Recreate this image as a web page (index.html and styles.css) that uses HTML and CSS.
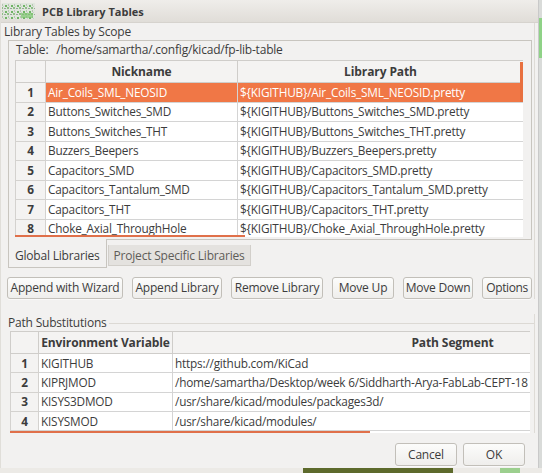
FILE: index.html
```html
<!DOCTYPE html>
<html>
<head>
<meta charset="utf-8">
<link rel="stylesheet" href="styles.css">
</head>
<body>
<div class="screen">
  <div class="top">
    <div class="dialog">
      <div class="titlebar">
        <svg class="appicon" width="36" height="20" viewBox="0 0 36 20">
          <defs>
            <pattern id="mot" width="6" height="6" patternUnits="userSpaceOnUse">
              <rect width="6" height="6" fill="#dfe6dc"/>
              <rect x="0" y="0" width="2" height="2" fill="#8fbf86"/>
              <rect x="3" y="1" width="2" height="1" fill="#9aa59a"/>
              <rect x="1" y="3" width="1" height="2" fill="#b7c4b3"/>
              <rect x="4" y="4" width="2" height="2" fill="#6fb365"/>
              <rect x="2" y="5" width="1" height="1" fill="#c8d0c6"/>
            </pattern>
          </defs>
          <rect x="1" y="2" width="33" height="16" fill="url(#mot)"/>
          <rect x="20" y="12" width="12" height="5" fill="#7cc46e" opacity="0.7"/>
        </svg>
        <span class="title">PCB Library Tables</span>
      </div>

      <div class="scope">
        <div class="scope-label">Library Tables by Scope</div>
        <div class="notebook">
          <div class="page">
            <div class="table-path"><span class="tp-key">Table:</span><span>/home/samartha/.config/kicad/fp-lib-table</span></div>
            <div class="grid-wrap grid-wrap1">
              <table class="grid grid1">
                <colgroup><col class="c-num1"><col class="c-nick"><col class="c-path"></colgroup>
                <thead>
                  <tr><th class="corner"></th><th>Nickname</th><th>Library Path</th></tr>
                </thead>
                <tbody>
                  <tr class="sel"><td class="rn">1</td><td>Air_Coils_SML_NEOSID</td><td>${KIGITHUB}/Air_Coils_SML_NEOSID.pretty</td></tr>
                  <tr><td class="rn">2</td><td>Buttons_Switches_SMD</td><td>${KIGITHUB}/Buttons_Switches_SMD.pretty</td></tr>
                  <tr><td class="rn">3</td><td>Buttons_Switches_THT</td><td>${KIGITHUB}/Buttons_Switches_THT.pretty</td></tr>
                  <tr><td class="rn">4</td><td>Buzzers_Beepers</td><td>${KIGITHUB}/Buzzers_Beepers.pretty</td></tr>
                  <tr><td class="rn">5</td><td>Capacitors_SMD</td><td>${KIGITHUB}/Capacitors_SMD.pretty</td></tr>
                  <tr><td class="rn">6</td><td>Capacitors_Tantalum_SMD</td><td>${KIGITHUB}/Capacitors_Tantalum_SMD.pretty</td></tr>
                  <tr><td class="rn">7</td><td>Capacitors_THT</td><td>${KIGITHUB}/Capacitors_THT.pretty</td></tr>
                  <tr><td class="rn">8</td><td>Choke_Axial_ThroughHole</td><td>${KIGITHUB}/Choke_Axial_ThroughHole.pretty</td></tr>
                </tbody>
              </table>
              <div class="vthumb"></div>
              <div class="hthumb hthumb1"></div>
            </div>
          </div>
          <div class="tabs">
            <div class="tab active">Global Libraries</div>
            <div class="tab">Project Specific Libraries</div>
          </div>
        </div>
        <div class="buttons">
          <button class="btn b-wizard">Append with Wizard</button>
          <button class="btn b-append">Append Library</button>
          <button class="btn b-remove">Remove Library</button>
          <button class="btn b-up">Move Up</button>
          <button class="btn b-down">Move Down</button>
          <button class="btn b-options">Options</button>
        </div>
      </div>

      <div class="subst">
        <div class="subst-head"><span class="subst-label">Path Substitutions</span><span class="subst-line"></span></div>
        <div class="grid-wrap grid-wrap2">
          <table class="grid grid2">
            <colgroup><col class="c-num2"><col class="c-env"><col class="c-seg"></colgroup>
            <thead>
              <tr><th class="corner"></th><th>Environment Variable</th><th>Path Segment</th></tr>
            </thead>
            <tbody>
              <tr><td class="rn">1</td><td>KIGITHUB</td><td>https://github.com/KiCad</td></tr>
              <tr><td class="rn">2</td><td>KIPRJMOD</td><td>/home/samartha/Desktop/week 6/Siddharth-Arya-FabLab-CEPT-18</td></tr>
              <tr><td class="rn">3</td><td>KISYS3DMOD</td><td>/usr/share/kicad/modules/packages3d/</td></tr>
              <tr><td class="rn">4</td><td>KISYSMOD</td><td>/usr/share/kicad/modules/</td></tr>
            </tbody>
          </table>
          <div class="hthumb hthumb2"></div>
        </div>
      </div>

      <div class="dialog-buttons">
        <button class="btn dbtn">Cancel</button>
        <button class="btn dbtn">OK</button>
      </div>
    </div>
    <div class="desk-right"><div class="green-bit"></div></div>
  </div>
  <div class="desk-bottom">
    <div class="db-gap1"></div>
    <div class="db-bar"></div>
    <div class="db-gap2"></div>
    <div class="db-green"></div>
  </div>
</div>
</body>
</html>
```

FILE: styles.css
```css
* { box-sizing: border-box; }
html, body { margin: 0; padding: 0; }
body {
  width: 542px;
  height: 473px;
  overflow: hidden;
  font-family: "Open Sans", "Noto Sans", sans-serif;
  font-size: 12px;
  letter-spacing: -0.2px;
  color: #3c3c3c;
  background: #e6e4e1;
}
.screen {
  width: 542px;
  height: 473px;
  display: flex;
  flex-direction: column;
  overflow: hidden;
}
.top { display: flex; height: 468px; }
.dialog {
  width: 538px;
  height: 468px;
  background: #f2f1f0;
  display: flex;
  flex-direction: column;
  border-left: 1px solid #e0ded9;
}
.desk-right {
  width: 4px;
  background: #d9dbd9;
  border-left: 1px solid #c9c9c9;
}
.green-bit { height: 40px; margin-top: 18px; background: #7ccf72; opacity: .8; }
.desk-bottom { height: 5px; display: flex; background: #eceae6; }
.db-gap1 { width: 303px; }
.db-bar { width: 150px; background: #5d6a2c; }
.db-gap2 { width: 47px; }
.db-green { width: 20px; background: #9ccf8e; }

/* title bar */
.titlebar {
  height: 23px;
  display: flex;
  align-items: center;
  background: linear-gradient(#efedea, #e0ddd8);
  border-bottom: 1px solid #d6d3ce;
}
.appicon { display: block; flex: none; }
.title { font-weight: bold; font-size: 11px; margin-left: 5px; color: #3c3c3c; letter-spacing: 0; }

/* library tables scope */
.scope {
  display: flex;
  flex-direction: column;
  margin-right: 3px;
  border-right: 1px solid #dedbd6;
}
.scope-label { height: 17px; line-height: 16px; padding: 1px 0 0 3px; font-size: 12px; }
.notebook { margin-left: 7px; width: 524px; }
.page {
  height: 200px;
  border: 1px solid #c8c5bf;
  padding: 0 6px;
  background: #f2f1f0;
}
.table-path { height: 19px; line-height: 17px; padding-left: 1px; }
.tp-key { margin-right: 8px; }

.grid-wrap { position: relative; overflow: hidden; background: #fff; }
.grid-wrap1 { width: 508px; height: 177px; }
.grid { border-collapse: collapse; table-layout: fixed; }
.grid1 { width: 508px; }
.c-num1 { width: 30px; }
.c-nick { width: 192px; }
.c-path { width: 286px; }
.grid th {
  height: 22px;
  font-weight: bold;
  text-align: center;
  background: #f4f3f2;
  border: 1px solid #cfcdca;
  padding: 0;
  color: #3c3c3c;
  letter-spacing: -0.1px;
}
.grid td {
  height: 19.5px;
  padding: 0 2px;
  border: 1px solid #d4d4d4;
  white-space: nowrap;
  overflow: hidden;
  background: #fff;
  line-height: 17px;
  font-size: 11.8px;
  letter-spacing: -0.2px;
}
.grid td.rn {
  text-align: center;
  font-weight: bold;
  background: #f4f3f2;
  padding: 0;
  border-color: #d4d2cf;
}
.grid tr.sel td:not(.rn) { background: #f07746; color: #fff; }
.vthumb {
  position: absolute;
  right: 0;
  top: 2px;
  width: 3px;
  height: 40px;
  background: #e8703f;
}
.hthumb { position: absolute; bottom: 0; left: 0; height: 2px; background: #e0704a; }
.hthumb1 { width: 230px; }

.tabs { display: flex; align-items: flex-start; }
.tab {
  height: 21px;
  margin-top: 5px;
  margin-left: 1px;
  padding: 1px 5px 0;
  line-height: 19px;
  background: #e4e2df;
  border: 1px solid #d2cfca;
  border-top: none;
  color: #5e5c58;
  white-space: nowrap;
}
.tab.active {
  height: 29px;
  margin-top: -1px;
  margin-left: 0;
  padding: 6px 6px 0;
  line-height: 21px;
  background: #f2f1f0;
  border-color: #c8c5bf;
  color: #3c3c3c;
}

.buttons { display: flex; gap: 9px; padding-left: 6px; margin-top: 9px; }
.btn {
  flex: none;
  white-space: nowrap;
  font-family: inherit;
  font-size: 12px;
  letter-spacing: -0.2px;
  color: #3c3c3c;
  height: 22px;
  padding: 0;
  text-align: center;
  border: 1px solid #c2bfb9;
  border-radius: 3px;
  background: linear-gradient(#fcfcfb, #efeeec);
  box-shadow: 0 1px 0 rgba(255,255,255,.6);
  line-height: 18px;
}
.b-wizard { width: 116px; }
.b-append { width: 90px; }
.b-remove { width: 92px; }
.b-up { width: 62px; }
.b-down { width: 70px; }
.b-options { width: 50px; letter-spacing: -0.4px; }

/* path substitutions */
.subst { margin-top: 15px; display: flex; flex-direction: column; margin-right: 3px; border-right: 1px solid #dedbd6; }
.subst-head { display: flex; align-items: center; height: 17px; padding-left: 7px; }
.subst-label { line-height: 16px; margin-right: 2px; }
.subst-line { flex: 1; height: 1px; background: #dcd9d4; margin-top: 2px; }
.grid-wrap2 { margin-left: 9px; margin-top: 0; width: 520px; height: 102px; }
.grid2 { width: 722px; }
.c-num2 { width: 28px; }
.c-env { width: 134px; }
.c-seg { width: 560px; }
.grid2 td { height: 19.3px; }
.hthumb2 { width: 360px; bottom: 0; }

.dialog-buttons { display: flex; justify-content: flex-end; gap: 6px; padding-right: 13px; margin-top: 10px; }
.dbtn { width: 62px; height: 23px; }
```
